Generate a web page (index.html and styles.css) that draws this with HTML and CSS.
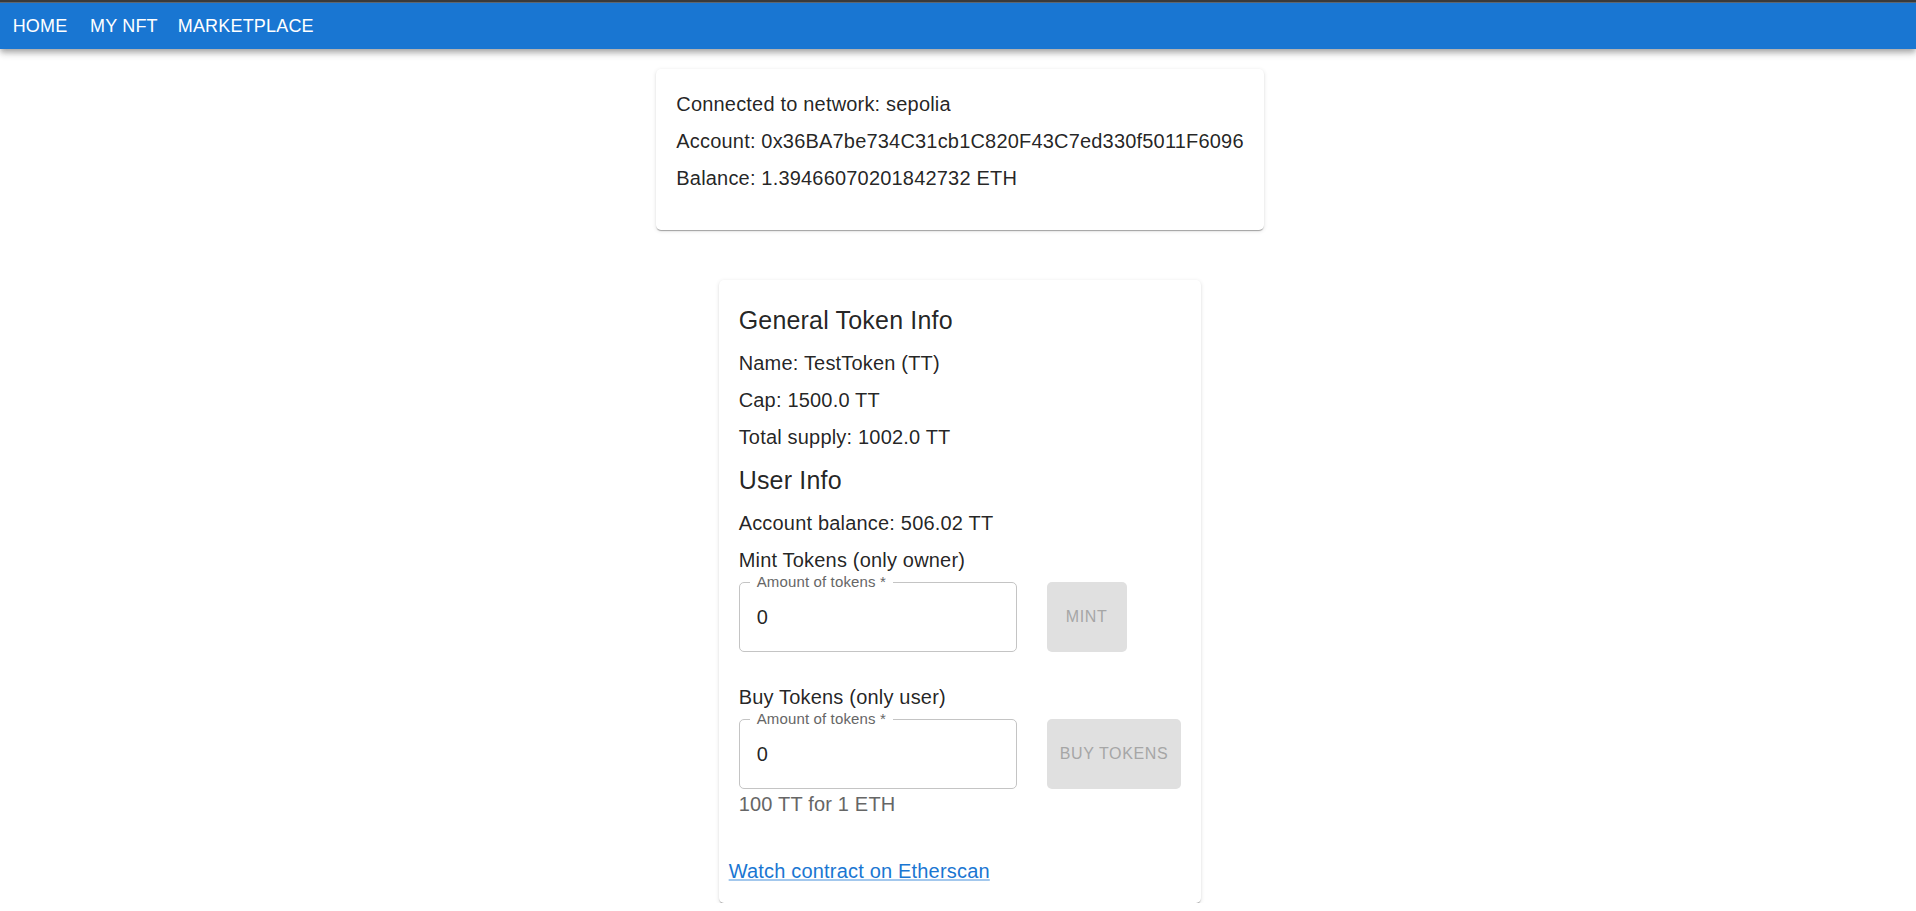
FILE: index.html
```html
<!DOCTYPE html>
<html lang="en">
<head>
<meta charset="utf-8">
<title>TestToken</title>
<link rel="stylesheet" href="styles.css">
</head>
<body>
<header class="app-bar">
  <nav class="nav">
    <a class="nav-link" href="#home">HOME</a>
    <a class="nav-link" href="#nft">MY NFT</a>
    <a class="nav-link" href="#marketplace">MARKETPLACE</a>
  </nav>
</header>
<main class="page">
  <section class="card account-card">
    <p class="text">Connected to network: sepolia</p>
    <p class="text">Account: 0x36BA7be734C31cb1C820F43C7ed330f5011F6096</p>
    <p class="text">Balance: 1.39466070201842732 ETH</p>
  </section>
  <section class="card token-card">
    <div class="card-content">
      <h2 class="heading">General Token Info</h2>
      <p class="text">Name: TestToken (TT)</p>
      <p class="text">Cap: 1500.0 TT</p>
      <p class="text">Total supply: 1002.0 TT</p>
      <h2 class="heading">User Info</h2>
      <p class="text">Account balance: 506.02 TT</p>
      <form class="token-form">
        <p class="text">Mint Tokens (only owner)</p>
        <div class="form-row">
          <div class="field">
            <input class="field-input" id="mint-amount" type="text" inputmode="decimal" value="0" required>
            <label class="field-label" for="mint-amount">Amount of tokens *</label>
          </div>
          <button class="button" type="submit" disabled>MINT</button>
        </div>
      </form>
      <form class="token-form">
        <p class="text">Buy Tokens (only user)</p>
        <div class="form-row">
          <div class="field">
            <input class="field-input" id="buy-amount" type="text" inputmode="decimal" value="0" required>
            <label class="field-label" for="buy-amount">Amount of tokens *</label>
          </div>
          <button class="button" type="submit" disabled>BUY TOKENS</button>
        </div>
        <p class="rate">100 TT for 1 ETH</p>
      </form>
    </div>
    <div class="card-actions">
      <a class="link" href="#etherscan">Watch contract on Etherscan</a>
    </div>
  </section>
</main>
</body>
</html>
```

FILE: styles.css
```css
* {
  box-sizing: border-box;
}

body {
  margin: 0;
  background: #fff;
  color: rgba(0, 0, 0, 0.87);
  font: 20px/30px "Liberation Sans", Arial, sans-serif;
  letter-spacing: 0.00938em;
}

.app-bar {
  border-top: 2px solid #3a3a3a;
  background: #1976d2;
  box-shadow: 0 3px 5px -1px rgba(0, 0, 0, 0.2), 0 5px 6px rgba(0, 0, 0, 0.14), 0 1px 12px rgba(0, 0, 0, 0.12);
}

.nav {
  display: flex;
  border-top: 1px solid #5c6670;
}

.nav-link {
  min-width: 80px;
  padding: 8px 10px;
  color: #fff;
  font-size: 18px;
  letter-spacing: 0.01em;
  text-align: center;
  text-decoration: none;
}

.page {
  display: flex;
  flex-direction: column;
  align-items: center;
  gap: 50px;
  padding: 20px 0 0 4px;
}

.card {
  border-radius: 5px;
  background: #fff;
  box-shadow: 0 2px 1px -1px rgba(0, 0, 0, 0.2), 0 1px 1px rgba(0, 0, 0, 0.14), 0 1px 4px rgba(0, 0, 0, 0.12);
}

.account-card {
  padding: 20px 20px 30px;
}

.card-content {
  padding: 19px 20px 27px;
}

.text {
  margin: 0 0 7px;
}

.heading {
  margin: 0 0 7px;
  font-size: 25px;
  font-weight: 400;
  line-height: 42px;
  letter-spacing: 0.0075em;
}

.token-form + .token-form {
  margin-top: 30px;
}

.form-row {
  display: flex;
  gap: 30px;
}

.field {
  position: relative;
  width: 278px;
}

.field-input {
  width: 100%;
  height: 70px;
  padding: 0 17px;
  border: 1px solid #c4c4c4;
  border-radius: 5px;
  background: #fff;
  color: inherit;
  font: inherit;
  letter-spacing: inherit;
}

.field-label {
  position: absolute;
  top: -10px;
  left: 11px;
  padding: 0 7px;
  background: #fff;
  color: #666;
  font-size: 15px;
  line-height: 20px;
  letter-spacing: 0.00938em;
}

.button {
  min-width: 80px;
  padding: 5px 13px;
  border: 0;
  border-radius: 5px;
  background: #e0e0e0;
  color: #a6a6a6;
  font: 16px/28px "Liberation Sans", Arial, sans-serif;
  letter-spacing: 0.04em;
}

.rate {
  margin: 0;
  color: #666;
}

.card-actions {
  padding: 10px 10px 17px;
}

.link {
  display: inline-block;
  color: #1976d2;
  text-decoration-color: rgba(25, 118, 210, 0.4);
}
```
